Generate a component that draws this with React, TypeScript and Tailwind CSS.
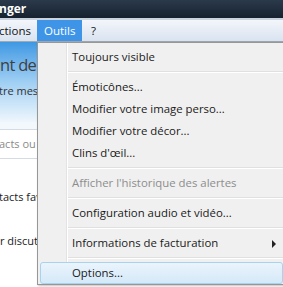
import React from "react";

const font = { fontFamily: "'Open Sans', 'Noto Sans', sans-serif" };

function Item({ label, disabled, arrow, active }: { label: string; disabled?: boolean; arrow?: boolean; active?: boolean }) {
  return (
    <div className="relative h-[22px] flex items-center">
      {active && (
        <div className="absolute left-[2px] right-[3px] top-0 bottom-0 rounded-[3px] border border-[#a9d2ef] bg-gradient-to-b from-[#eaf4fc] to-[#d5e9f8]" />
      )}
      <span className={`relative pl-[34px] text-[11.4px] leading-none ${disabled ? "text-[#8d8d8d]" : "text-[#1a1a1a]"}`}>{label}</span>
      {arrow && (
        <svg className="absolute left-[234px] top-[8px]" width="5" height="8" viewBox="0 0 5 8">
          <path d="M0 0 L4 4 L0 8 Z" fill="#222" />
        </svg>
      )}
    </div>
  );
}

function Sep() {
  return (
    <div className="h-[8px] flex flex-col justify-center pl-[30px]">
      <div className="h-px bg-[#e0e0e0]" />
      <div className="h-px bg-white" />
    </div>
  );
}

export default function App() {
  return (
    <div className="relative w-[283px] h-[287px] overflow-hidden bg-white" style={font}>
      <div className="h-[18px] bg-gradient-to-b from-[#2b3a4b] to-[#16222f] text-white text-[12px] font-bold flex items-center whitespace-nowrap">
        <span className="-ml-[1px]">nger</span>
      </div>
      <div className="h-[2px] bg-[#c9d3dd]" />
      <div className="h-[22px] bg-gradient-to-b from-[#f3f6fb] to-[#d9e3f0] border-b border-[#a0a8b2] flex items-center text-[11.5px] text-[#111] whitespace-nowrap">
        <span className="w-[38px] -ml-[1px]">ctions</span>
        <span className="w-[45px] h-full bg-[#3e95e8] text-white flex items-center pl-[7px]">Outils</span>
        <span className="pl-[9px]">?</span>
      </div>
      <div className="flex flex-col whitespace-nowrap">
        <div className="h-[80px] bg-gradient-to-b from-[#3c98e3] via-[#9fcff3] to-[#eef6fc] pt-[15px]">
          <div className="text-[16.5px] tracking-[-0.7px] leading-none text-[#3f3f3f]">nt de</div>
          <div className="text-[11px] text-[#333] mt-[9px] -ml-[1px]">tre mes</div>
        </div>
        <div className="h-[7px] bg-[#f3f8fc]" />
        <div className="h-[30px] border-y border-[#d4dbe3] flex items-center text-[11px] text-[#8a8a8a] -ml-[1px]">acts ou</div>
        <div className="h-[31px]" />
        <div className="text-[11px] text-[#222] leading-[14px] -ml-[1px]">tacts fav</div>
        <div className="h-[30px]" />
        <div className="text-[11px] text-[#222] leading-[14px]">r discut</div>
      </div>

      <div className="absolute left-[37px] top-[42px] w-[250px] h-[243px] border border-[#979797] bg-[#f0f0f0] shadow-[1px_1px_2px_rgba(0,0,0,0.25)]">
        <div className="absolute left-[28px] top-0 bottom-0 w-px bg-[#e2e3e3]" />
        <div className="absolute left-[29px] top-0 bottom-0 w-px bg-white" />
        <div className="relative pt-[3px]">
          <Item label="Toujours visible" />
          <Sep />
          <Item label="Émoticônes..." />
          <Item label="Modifier votre image perso..." />
          <Item label="Modifier votre décor..." />
          <Item label="Clins d'œil..." />
          <Sep />
          <Item label="Afficher l'historique des alertes" disabled />
          <Sep />
          <Item label="Configuration audio et vidéo..." />
          <Sep />
          <Item label="Informations de facturation" arrow />
          <Sep />
          <Item label="Options..." active />
        </div>
      </div>
    </div>
  );
}
